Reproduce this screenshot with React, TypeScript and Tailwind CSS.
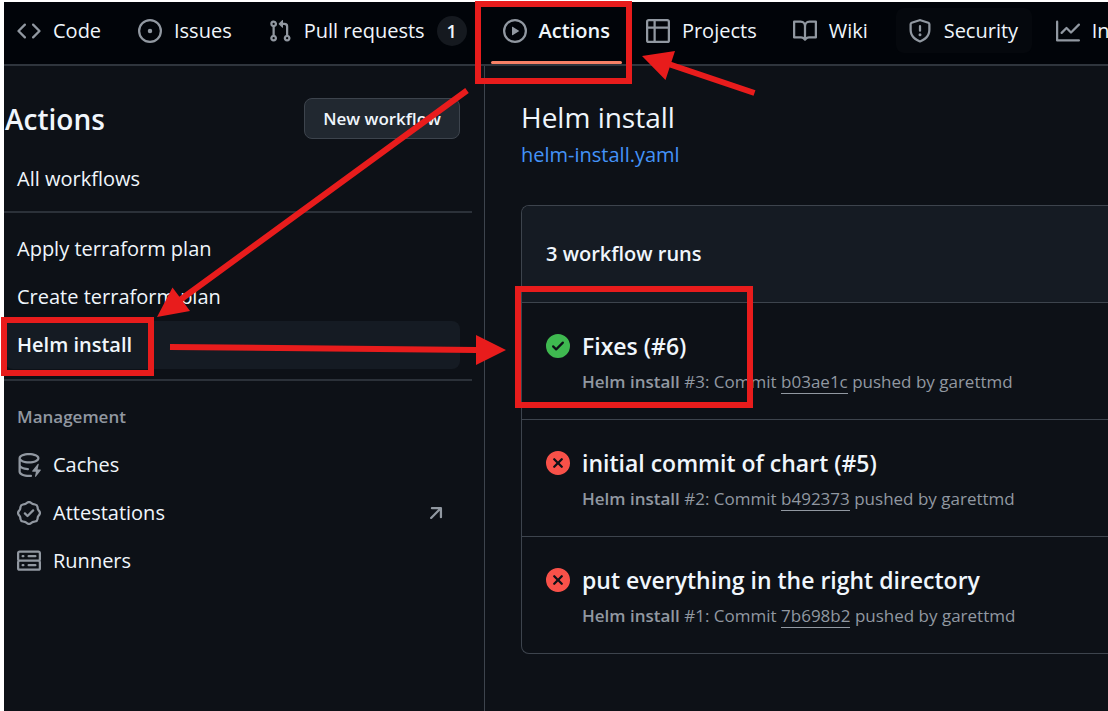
import type { ReactNode } from "react";

const ICONS = {
  code: "m11.28 3.22 4.25 4.25a.75.75 0 0 1 0 1.06l-4.25 4.25a.749.749 0 0 1-1.275-.326.749.749 0 0 1 .215-.734L13.94 8l-3.72-3.72a.749.749 0 0 1 .326-1.275.749.749 0 0 1 .734.215Zm-6.56 0a.751.751 0 0 1 1.042.018.751.751 0 0 1 .018 1.042L2.06 8l3.72 3.72a.749.749 0 0 1-.326 1.275.749.749 0 0 1-.734-.215L.47 8.53a.75.75 0 0 1 0-1.06Z",
  issue:
    "M8 9.5a1.5 1.5 0 1 0 0-3 1.5 1.5 0 0 0 0 3ZM8 0a8 8 0 1 1 0 16A8 8 0 0 1 8 0ZM1.5 8a6.5 6.5 0 1 0 13 0 6.5 6.5 0 0 0-13 0Z",
  pull: "M1.5 3.25a2.25 2.25 0 1 1 3 2.122v5.256a2.251 2.251 0 1 1-1.5 0V5.372A2.25 2.25 0 0 1 1.5 3.25Zm5.677-.177L9.573.677A.25.25 0 0 1 10 .854V2.5h1A2.5 2.5 0 0 1 13.5 5v5.628a2.251 2.251 0 1 1-1.5 0V5a1 1 0 0 0-1-1h-1v1.646a.25.25 0 0 1-.427.177L7.177 3.427a.25.25 0 0 1 0-.354ZM3.75 2.5a.75.75 0 1 0 0 1.5.75.75 0 0 0 0-1.5Zm0 9.5a.75.75 0 1 0 0 1.5.75.75 0 0 0 0-1.5Zm8.25.75a.75.75 0 1 0 1.5 0 .75.75 0 0 0-1.5 0Z",
  play: "M8 0a8 8 0 1 1 0 16A8 8 0 0 1 8 0ZM1.5 8a6.5 6.5 0 1 0 13 0 6.5 6.5 0 0 0-13 0Zm4.879-2.773 4.264 2.559a.25.25 0 0 1 0 .428l-4.264 2.559A.25.25 0 0 1 6 10.559V5.442a.25.25 0 0 1 .379-.215Z",
  table:
    "M0 1.75C0 .784.784 0 1.75 0h12.5C15.216 0 16 .784 16 1.75v12.5A1.75 1.75 0 0 1 14.25 16H1.75A1.75 1.75 0 0 1 0 14.25ZM6.5 6.5v8h7.75a.25.25 0 0 0 .25-.25V6.5Zm8-1.5V1.75a.25.25 0 0 0-.25-.25H6.5V5Zm-13 1.5v7.75c0 .138.112.25.25.25H5v-8ZM5 5V1.5H1.75a.25.25 0 0 0-.25.25V5Z",
  book: "M0 1.75A.75.75 0 0 1 .75 1h4.253c1.227 0 2.317.59 3 1.501A3.743 3.743 0 0 1 11.006 1h4.245a.75.75 0 0 1 .75.75v10.5a.75.75 0 0 1-.75.75h-4.507a2.25 2.25 0 0 0-1.591.659l-.622.621a.75.75 0 0 1-1.06 0l-.622-.621A2.25 2.25 0 0 0 5.258 13H.75a.75.75 0 0 1-.75-.75Zm7.251 10.324.004-5.073-.002-2.253A2.25 2.25 0 0 0 5.003 2.5H1.5v9h3.757a3.75 3.75 0 0 1 1.994.574ZM8.755 4.75l-.004 7.322a3.752 3.752 0 0 1 1.992-.572H14.5v-9h-3.495a2.25 2.25 0 0 0-2.25 2.25Z",
  shield:
    "M7.467.133a1.748 1.748 0 0 1 1.066 0l5.25 1.68A1.75 1.75 0 0 1 15 3.48V7c0 1.566-.32 3.182-1.303 4.682-.983 1.498-2.585 2.813-5.032 3.855a1.697 1.697 0 0 1-1.33 0c-2.447-1.042-4.049-2.357-5.032-3.855C1.32 10.182 1 8.566 1 7V3.48a1.75 1.75 0 0 1 1.217-1.667Zm.61 1.429a.25.25 0 0 0-.153 0l-5.25 1.68a.25.25 0 0 0-.174.238V7c0 1.358.275 2.666 1.057 3.86.784 1.194 2.121 2.34 4.366 3.297a.196.196 0 0 0 .154 0c2.245-.956 3.582-2.104 4.366-3.298C13.225 9.666 13.5 8.36 13.5 7V3.48a.251.251 0 0 0-.174-.237l-5.25-1.68ZM8.75 4.75v3a.75.75 0 0 1-1.5 0v-3a.75.75 0 0 1 1.5 0ZM9 10.5a1 1 0 1 1-2 0 1 1 0 0 1 2 0Z",
  graph:
    "M1.5 1.75V13.5h13.75a.75.75 0 0 1 0 1.5H.75a.75.75 0 0 1-.75-.75V1.75a.75.75 0 0 1 1.5 0Zm14.28 2.53-5.25 5.25a.75.75 0 0 1-1.06 0L7 7.06 4.28 9.78a.751.751 0 0 1-1.042-.018.751.751 0 0 1-.018-1.042l3.25-3.25a.75.75 0 0 1 1.06 0L10 7.94l4.72-4.72a.751.751 0 0 1 1.042.018.751.751 0 0 1 .018 1.042Z",
  cache:
    "M2.5 5.724V8c0 .248.238.7 1.169 1.159.874.43 2.144.745 3.62.822a.75.75 0 1 1-.078 1.498c-1.622-.085-3.102-.432-4.204-.975a5.565 5.565 0 0 1-.507-.28V12.5c0 .133.058.318.282.551.227.237.591.483 1.101.707 1.015.447 2.47.742 4.117.742.406 0 .802-.018 1.183-.052a.751.751 0 1 1 .134 1.494C8.89 15.98 8.45 16 8 16c-1.805 0-3.475-.32-4.721-.869-.623-.274-1.173-.619-1.579-1.041-.408-.425-.7-.964-.7-1.59v-9c0-.626.292-1.165.7-1.591.406-.42.956-.766 1.579-1.04C4.525.32 6.195 0 8 0c1.806 0 3.476.32 4.721.869.623.274 1.173.619 1.579 1.041.408.425.7.964.7 1.59 0 .626-.292 1.165-.7 1.591-.406.42-.956.766-1.578 1.04C11.475 6.68 9.805 7 8 7c-1.805 0-3.475-.32-4.721-.869a6.15 6.15 0 0 1-.779-.407Zm0-2.224c0 .133.058.318.282.551.227.237.591.483 1.101.707C4.898 5.205 6.353 5.5 8 5.5c1.646 0 3.101-.295 4.118-.742.508-.224.873-.471 1.1-.708.224-.232.282-.417.282-.55 0-.133-.058-.318-.282-.551-.227-.237-.591-.483-1.101-.707C11.102 1.795 9.647 1.5 8 1.5c-1.646 0-3.101.295-4.118.742-.508.224-.873.471-1.1.708-.224.232-.282.417-.282.55ZM14.49 7.582a.375.375 0 0 0-.66-.313l-3.625 4.625a.375.375 0 0 0 .295.606h2.127l-.619 2.922a.375.375 0 0 0 .666.304l3.125-4.125A.375.375 0 0 0 15.5 11h-1.778l.769-3.418Z",
  verified:
    "m9.585.52.929.68c.153.112.331.186.518.215l1.138.175a2.678 2.678 0 0 1 2.24 2.24l.174 1.139c.029.187.103.365.215.518l.68.928a2.677 2.677 0 0 1 0 3.17l-.68.928a1.174 1.174 0 0 0-.215.518l-.175 1.138a2.678 2.678 0 0 1-2.241 2.241l-1.138.175a1.17 1.17 0 0 0-.518.215l-.928.68a2.677 2.677 0 0 1-3.17 0l-.928-.68a1.174 1.174 0 0 0-.518-.215L3.83 14.41a2.678 2.678 0 0 1-2.24-2.24l-.175-1.138a1.17 1.17 0 0 0-.215-.518l-.68-.928a2.677 2.677 0 0 1 0-3.17l.68-.928c.112-.153.186-.331.215-.518l.175-1.14a2.678 2.678 0 0 1 2.24-2.24l1.139-.175c.187-.029.365-.103.518-.215l.928-.68a2.677 2.677 0 0 1 3.17 0ZM7.303 1.728l-.927.68a2.67 2.67 0 0 1-1.18.489l-1.137.174a1.179 1.179 0 0 0-.987.987l-.174 1.136a2.677 2.677 0 0 1-.489 1.18l-.68.928a1.18 1.18 0 0 0 0 1.394l.68.927c.256.348.424.753.489 1.18l.174 1.137c.078.509.478.909.987.987l1.136.174a2.67 2.67 0 0 1 1.18.489l.928.68c.414.305.979.305 1.394 0l.927-.68a2.67 2.67 0 0 1 1.18-.489l1.137-.174a1.18 1.18 0 0 0 .987-.987l.174-1.136a2.67 2.67 0 0 1 .489-1.18l.68-.928a1.176 1.176 0 0 0 0-1.394l-.68-.927a2.686 2.686 0 0 1-.489-1.18l-.174-1.137a1.179 1.179 0 0 0-.987-.987l-1.136-.174a2.677 2.677 0 0 1-1.18-.489l-.928-.68a1.176 1.176 0 0 0-1.394 0ZM11.28 6.78l-3.75 3.75a.75.75 0 0 1-1.06 0L4.72 8.78a.751.751 0 0 1 .018-1.042.751.751 0 0 1 1.042-.018L7 8.94l3.22-3.22a.751.751 0 0 1 1.042.018.751.751 0 0 1 .018 1.042Z",
  server:
    "M1.75 1h12.5c.966 0 1.75.784 1.75 1.75v4c0 .372-.116.717-.314 1 .198.283.314.628.314 1v4a1.75 1.75 0 0 1-1.75 1.75H1.75A1.75 1.75 0 0 1 0 12.75v-4c0-.358.109-.707.314-1a1.739 1.739 0 0 1-.314-1v-4C0 1.784.784 1 1.75 1ZM1.5 2.75v4c0 .138.112.25.25.25h12.5a.25.25 0 0 0 .25-.25v-4a.25.25 0 0 0-.25-.25H1.75a.25.25 0 0 0-.25.25Zm.25 5.75a.25.25 0 0 0-.25.25v4c0 .138.112.25.25.25h12.5a.25.25 0 0 0 .25-.25v-4a.25.25 0 0 0-.25-.25ZM7 4.75A.75.75 0 0 1 7.75 4h4.5a.75.75 0 0 1 0 1.5h-4.5A.75.75 0 0 1 7 4.75ZM7.75 10h4.5a.75.75 0 0 1 0 1.5h-4.5a.75.75 0 0 1 0-1.5ZM3 4.75A.75.75 0 0 1 3.75 4h.5a.75.75 0 0 1 0 1.5h-.5A.75.75 0 0 1 3 4.75ZM3.75 10h.5a.75.75 0 0 1 0 1.5h-.5a.75.75 0 0 1 0-1.5Z",
  arrowUpRight:
    "M4.53 4.75A.75.75 0 0 1 5.28 4h6.01a.75.75 0 0 1 .75.75v6.01a.75.75 0 0 1-1.5 0v-4.2l-5.26 5.261a.749.749 0 0 1-1.275-.326.749.749 0 0 1 .215-.734L9.48 5.5h-4.2a.75.75 0 0 1-.75-.75Z",
  success:
    "M8 16A8 8 0 1 1 8 0a8 8 0 0 1 0 16Zm3.78-9.72a.751.751 0 0 0-.018-1.042.751.751 0 0 0-1.042-.018L6.75 9.19 5.28 7.72a.751.751 0 0 0-1.042.018.751.751 0 0 0-.018 1.042l2 2a.75.75 0 0 0 1.06 0Z",
  failure:
    "M2.343 13.657A8 8 0 1 1 13.658 2.343 8 8 0 0 1 2.343 13.657ZM6.03 4.97a.751.751 0 0 0-1.042.018.751.751 0 0 0-.018 1.042L6.94 8 4.97 9.97a.749.749 0 0 0 .326 1.275.749.749 0 0 0 .734-.215L8 9.06l1.97 1.97a.749.749 0 0 0 1.275-.326.749.749 0 0 0-.215-.734L9.06 8l1.97-1.97a.749.749 0 0 0-.326-1.275.749.749 0 0 0-.734.215L8 6.94Z",
};

type IconName = keyof typeof ICONS;

function Icon({ name, className = "text-[#9198a1]" }: { name: IconName; className?: string }) {
  return (
    <svg viewBox="0 0 16 16" fill="currentColor" aria-hidden="true" className={`size-6 shrink-0 ${className}`}>
      <path d={ICONS[name]} />
    </svg>
  );
}

type Tab = { label: string; icon: IconName; width?: string; count?: number; current?: boolean; hovered?: boolean };

const TABS: Tab[] = [
  { label: "Code", icon: "code", width: "min-w-[109px]" },
  { label: "Issues", icon: "issue" },
  { label: "Pull requests", icon: "pull", count: 1 },
  { label: "Actions", icon: "play", current: true },
  { label: "Projects", icon: "table" },
  { label: "Wiki", icon: "book", width: "min-w-[103px]" },
  { label: "Security", icon: "shield", width: "min-w-[136px]", hovered: true },
  { label: "Insights", icon: "graph" },
];

function RepoTabs() {
  return (
    <nav aria-label="Repository" className="overflow-hidden border-b-2 border-[#2f353d] bg-[#010409]">
      <ul className="flex gap-3 pl-px">
        {TABS.map((tab) => (
          <li key={tab.label} className={`flex shrink-0 flex-col pt-1.5 ${tab.width ?? ""}`}>
            <a
              href="#"
              aria-current={tab.current ? "page" : undefined}
              className={`flex h-[45px] items-center gap-3 rounded-lg px-3 whitespace-nowrap ${
                tab.hovered ? "bg-[#05080d]" : ""
              } ${tab.current ? "font-semibold" : ""}`}
            >
              <Icon name={tab.icon} />
              {tab.label}
              {tab.count !== undefined && (
                <span className="flex size-[30px] items-center justify-center rounded-full bg-[#15191f] text-lg font-semibold">
                  {tab.count}
                </span>
              )}
            </a>
            <span className={`mt-2 h-[3px] rounded-full ${tab.current ? "bg-[#f78166]" : ""}`} />
          </li>
        ))}
      </ul>
    </nav>
  );
}

function SideLink({
  icon,
  current,
  external,
  children,
}: {
  icon?: IconName;
  current?: boolean;
  external?: boolean;
  children: ReactNode;
}) {
  return (
    <li>
      <a
        href="#"
        aria-current={current ? "page" : undefined}
        className={`flex h-12 items-center gap-3 rounded-lg px-3 ${current ? "bg-[#151b23] font-semibold" : ""}`}
      >
        {icon && <Icon name={icon} />}
        <span className="grow">{children}</span>
        {external && <Icon name="arrowUpRight" />}
      </a>
    </li>
  );
}

function Sidebar() {
  return (
    <aside className="w-[481px] shrink-0 border-r border-[#3d444d] pt-8 pr-3">
      <div className="flex items-center justify-between pr-3 pl-px">
        <h2 className="text-[28px] leading-10 font-semibold">Actions</h2>
        <button
          type="button"
          className="h-[41px] rounded-lg border border-[#3d444d] bg-[#212830] px-[18px] text-[17px] font-semibold"
        >
          New workflow
        </button>
      </div>
      <ul className="mt-4 pr-3 pl-px">
        <SideLink>All workflows</SideLink>
      </ul>
      <hr className="my-2 mb-3 border-t-2 border-[#2b3139]" />
      <ul className="pr-3 pl-px">
        <SideLink>Apply terraform plan</SideLink>
        <SideLink>Create terraform plan</SideLink>
        <SideLink current>Helm install</SideLink>
      </ul>
      <hr className="mt-2.5 border-t-2 border-[#2b3139]" />
      <h3 className="mt-[22px] mb-2.5 pl-[13px] text-[17px] leading-7 font-semibold text-[#9198a1]">Management</h3>
      <ul className="pr-3 pl-px">
        <SideLink icon="cache">Caches</SideLink>
        <SideLink icon="verified" external>
          Attestations
        </SideLink>
        <SideLink icon="server">Runners</SideLink>
      </ul>
    </aside>
  );
}

const RUNS = [
  { title: "Fixes (#6)", run: 3, commit: "b03ae1c", ok: true },
  { title: "initial commit of chart (#5)", run: 2, commit: "b492373", ok: false },
  { title: "put everything in the right directory", run: 1, commit: "7b698b2", ok: false },
];

function WorkflowRuns() {
  return (
    <main className="min-w-0 grow pt-[31px] pl-9">
      <h1 className="text-[28px] leading-10">Helm install</h1>
      <a href="#" className="mt-0.5 block w-fit leading-8 text-[#4493f8]">
        helm-install.yaml
      </a>
      <section className="mt-[34px] overflow-hidden rounded-l-lg border border-r-0 border-[#3d444d]">
        <h2 className="flex h-24 items-center bg-[#151b23] px-6 font-semibold">3 workflow runs</h2>
        <ul>
          {RUNS.map((r) => (
            <li key={r.run} className="flex h-[117px] gap-3 border-t border-[#3d444d] px-6 pt-[25px]">
              <Icon name={r.ok ? "success" : "failure"} className={`mt-1.5 ${r.ok ? "text-[#3fb950]" : "text-[#f85149]"}`} />
              <div className="whitespace-nowrap">
                <a href="#" className="block text-[23px] leading-9 font-semibold">
                  {r.title}
                </a>
                <p className="text-[17px] leading-9 text-[#9198a1]">
                  <span className="font-semibold">Helm install</span> #{r.run}: Commit{" "}
                  <a href="#" className="border-b border-[#9198a1]">
                    {r.commit}
                  </a>{" "}
                  pushed by garettmd
                </p>
              </div>
            </li>
          ))}
        </ul>
      </section>
    </main>
  );
}

/* Red call-outs drawn over the page to show the click path. */
function Annotations() {
  return (
    <svg
      width="1108"
      height="711"
      viewBox="0 0 1108 711"
      aria-hidden="true"
      className="pointer-events-none absolute top-0 left-0 max-w-none text-[#e81c1c]"
    >
      <g fill="none" stroke="currentColor" strokeWidth="6">
        <rect x="478" y="4" width="151" height="77" />
        <rect x="4" y="320" width="147" height="53" />
        <rect x="518" y="289" width="232" height="116" />
        <path d="M754.5 93 670 64.5M467 90.500 180 300M170 347 477 350" />
      </g>
      <path
        fill="currentColor"
        d="M642 56 675 51 665.5 80ZM157 317 172.5 287.5 190 311ZM506 350 476 335V365Z"
      />
    </svg>
  );
}

export default function App() {
  return (
    <div className="relative flex min-h-screen flex-col overflow-hidden bg-white pt-0.5 pl-1 font-['Open_Sans','Noto_Sans',sans-serif] text-[20px] text-[#f0f6fc]">
      <RepoTabs />
      <div className="flex grow bg-[#0d1117]">
        <Sidebar />
        <WorkflowRuns />
      </div>
      <Annotations />
    </div>
  );
}
